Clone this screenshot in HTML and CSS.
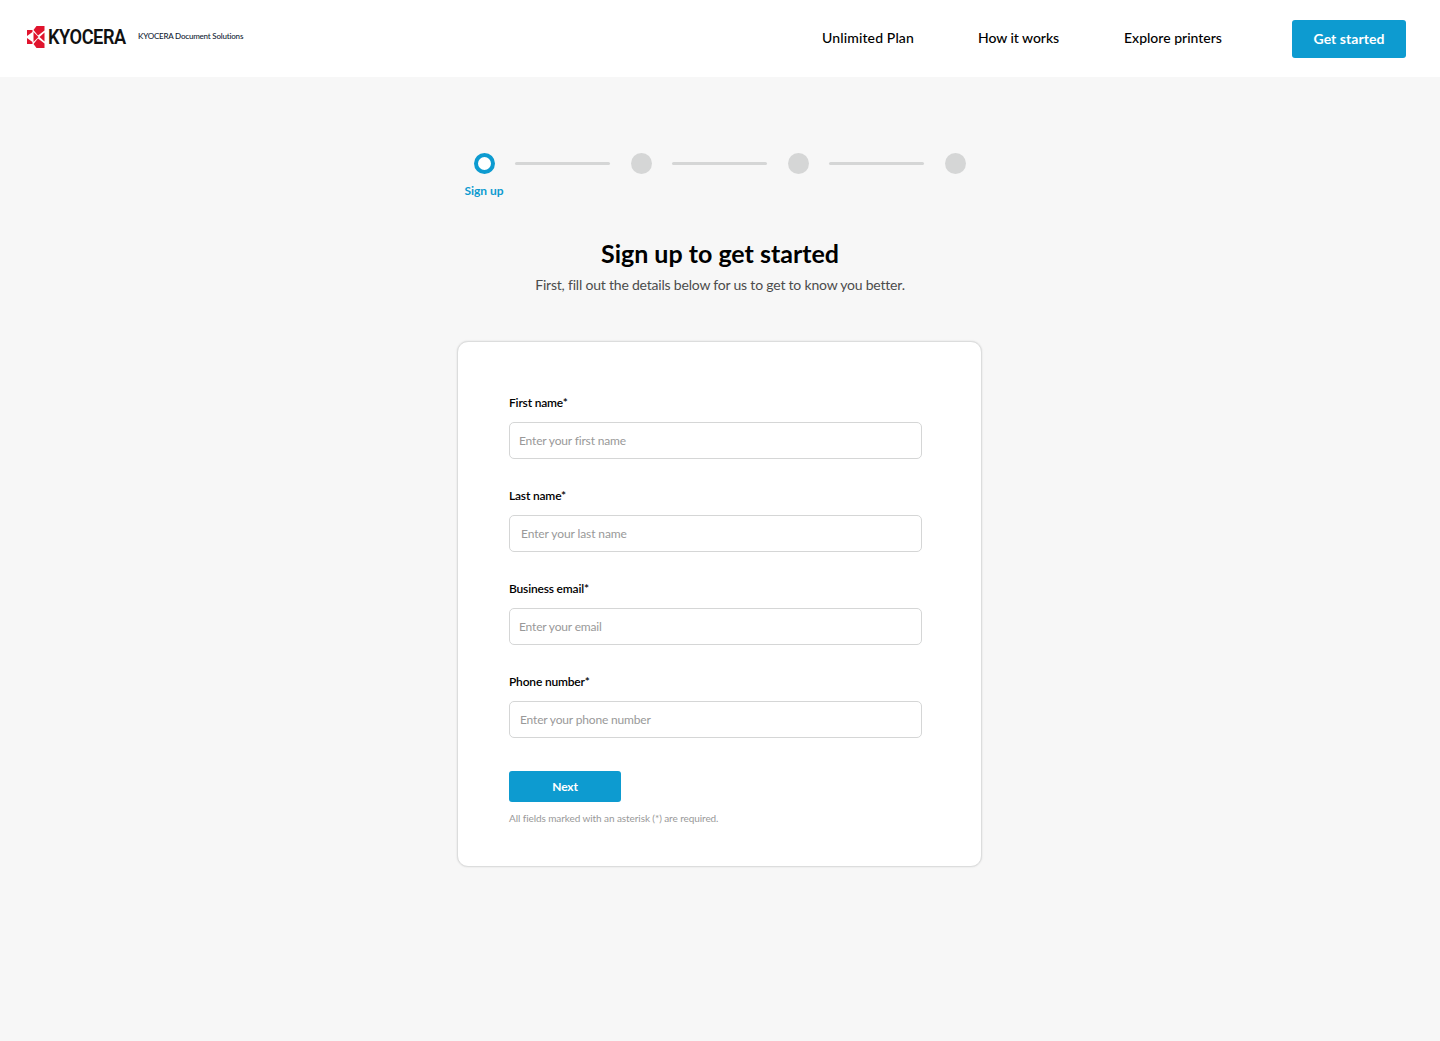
FILE: index.html
```html
<!DOCTYPE html>
<html lang="en">
<head>
    <meta charset="UTF-8">
    <meta name="viewport" content="width=device-width, initial-scale=1.0">
    <title>Sign up - KYOCERA Document Solutions</title>
    <link rel="stylesheet" href="styles.css">
</head>
<body>
    <header class="header">
        <a class="brand" href="#">
            <svg class="logo" width="18" height="22" viewBox="0 0 18 22">
                <g fill="#e0142d">
                    <path d="M9.500 0H17.500v4.500L11 9.500 6.500 4z"/>
                    <path d="M9.500 22H17.500v-4.500L11 12.500 6.500 18z"/>
                    <path d="M0 4h5.500v2L0 10zM0 18h5.500v-2L0 12z"/>
                    <path d="M6.500 6L11.500 11 6.500 16z"/>
                    <path d="M17.500 6.500v9L12.500 11z"/>
                </g>
            </svg>
            <span class="wordmark">KYOCERA</span>
            <span class="tagline">KYOCERA Document Solutions</span>
        </a>
        <nav class="nav">
            <a class="link plan" href="#">Unlimited Plan</a>
            <a class="link how" href="#">How it works</a>
            <a class="link explore" href="#">Explore printers</a>
            <a class="btn start" href="#">Get started</a>
        </nav>
    </header>

    <main>
        <div class="steps">
            <div class="step active"><span class="step-label">Sign up</span></div>
            <div class="line"></div>
            <div class="step"></div>
            <div class="line"></div>
            <div class="step"></div>
            <div class="line"></div>
            <div class="step"></div>
        </div>

        <h1>Sign up to get started</h1>
        <p class="intro">First, fill out the details below for us to get to know you better.</p>

        <form class="card">
            <div class="field">
                <label for="firstName">First name*</label>
                <input type="text" id="firstName" placeholder="Enter your first name">
            </div>
            <div class="field">
                <label for="lastName">Last name*</label>
                <input type="text" id="lastName" placeholder="Enter your last name">
            </div>
            <div class="field">
                <label for="email">Business email*</label>
                <input type="email" id="email" placeholder="Enter your email">
            </div>
            <div class="field">
                <label for="phone">Phone number*</label>
                <input type="tel" id="phone" placeholder="Enter your phone number">
            </div>
            <button type="button" class="btn next">Next</button>
            <p class="note">All fields marked with an asterisk (*) are required.</p>
        </form>
    </main>
</body>
</html>
```
FILE: styles.css
```css
* {
    box-sizing: border-box;
}

body {
    margin: 0;
    min-height: 100vh;
    font-family: Lato, sans-serif;
    background-color: #f7f7f7;
    color: #000;
}

a {
    color: inherit;
    text-decoration: none;
}

/* Header */
.header {
    display: flex;
    justify-content: space-between;
    height: 77px;
    padding: 0 34px 0 27px;
    background-color: #fff;
}

.brand {
    display: flex;
    height: 73px;
    align-items: center;
}

.wordmark {
    width: 86px;
    margin: 0 4px 0 3px;
    font-family: Roboto, sans-serif;
    font-size: 20px;
    line-height: 24px;
    font-weight: 600;
    letter-spacing: -0.5px;
    transform: scaleX(0.91); /* Squeeze to the narrow logo lettering */
    transform-origin: left;
    color: #111;
}

.tagline {
    padding-bottom: 1px;
    font-size: 8px;
    font-weight: 500;
    letter-spacing: -0.2px;
    white-space: nowrap;
    color: #123;
}

.nav {
    display: flex;
    align-items: center;
    height: 77px;
    font-size: 14px;
    font-weight: 500;
    white-space: nowrap;
}

.link {
    padding-bottom: 2px;
}

.plan {
    width: 156px;
    letter-spacing: 0.13px;
}

.how {
    width: 146px;
    letter-spacing: -0.05px;
}

.explore {
    width: 168px;
}

.btn {
    display: flex;
    align-items: center;
    justify-content: center;
    border: none;
    border-radius: 3px;
    background-color: #0d9bd0;
    color: #fff;
    font-family: inherit;
    font-weight: 700;
}

.start {
    width: 114px;
    height: 38px;
    letter-spacing: 0.05px;
}

/* Progress */
.steps {
    display: flex;
    align-items: center;
    justify-content: space-between;
    width: 492px;
    height: 21px;
    margin: 76px 0 0 473.5px;
}

.step {
    position: relative;
    width: 21px;
    height: 21px;
    border-radius: 50%;
    background-color: #d5d6d6;
}

.step.active {
    border: 4.5px solid #0d9bd0;
    background-color: #fff;
}

.step-label {
    position: absolute;
    top: 26px;
    left: 50%;
    transform: translateX(-50%);
    font-size: 12px;
    line-height: 16px;
    font-weight: 700;
    white-space: nowrap;
    color: #0d9bd0;
}

.line {
    width: 95px;
    height: 3px;
    border-radius: 2px;
    background-color: #d5d6d6;
}

h1 {
    margin: 63px 0 0;
    font-size: 25px;
    line-height: 32px;
    font-weight: 700;
    text-align: center;
}

.intro {
    margin: 6px 0 0;
    font-size: 14px;
    line-height: 20px;
    letter-spacing: -0.2px;
    text-align: center;
    color: #4c4c4c;
}

/* Form */
.card {
    width: 525px;
    height: 526px;
    margin: 46px 0 0 457px;
    padding: 52px 59px 0 51px;
    border: 1px solid #dcdddd;
    border-radius: 11px;
    background-color: #fff;
    box-shadow: 0 0 2px rgba(0,0,0,0.12);
}

.field {
    height: 93px;
}

label {
    display: block;
    height: 28px;
    font-size: 12px;
    line-height: 18px;
    font-weight: 600;
    letter-spacing: -0.18px;
}

input {
    display: block;
    width: 413px;
    height: 37px;
    padding: 0 9px;
    border: 1px solid #d5d6d6;
    border-radius: 5px;
    font-family: inherit;
    font-size: 12px;
    letter-spacing: -0.17px;
}

#lastName {
    padding-left: 11px;
    letter-spacing: -0.1px;
}

#phone {
    padding-left: 10px;
}

input::placeholder {
    color: #999;
}

.next {
    width: 112px;
    height: 31px;
    margin-top: 5px;
    font-size: 12px;
    letter-spacing: -0.2px;
}

.note {
    margin: 9px 0 0;
    font-size: 10px;
    line-height: 14px;
    letter-spacing: -0.08px;
    color: #999;
}
```
